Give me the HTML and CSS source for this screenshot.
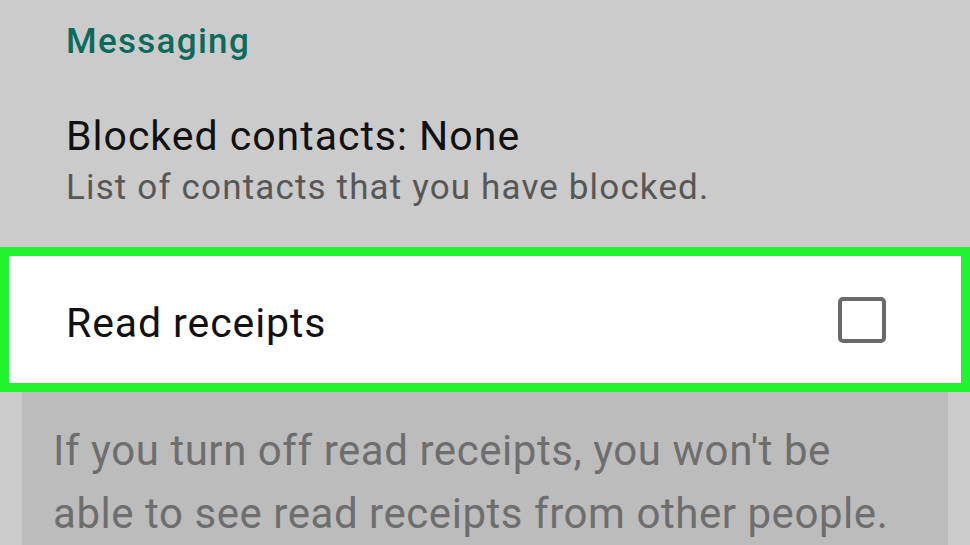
FILE: index.html
```html
<!DOCTYPE html>
<html>

<head>
    <title>Messaging settings</title>
    <link rel="stylesheet" href="styles.css">
</head>

<body class="screen">
    <h2 class="group-title">Messaging</h2>

    <div class="pref">
        <div class="pref-title">Blocked contacts: None</div>
        <div class="pref-summary">List of contacts that you have blocked.</div>
    </div>

    <div class="pref-row highlight">
        <span class="pref-title row-title">Read receipts</span>
        <span class="check"></span>
    </div>

    <div class="note">
        If you turn off read receipts, you won't be<br>
        able to see read receipts from other people.
    </div>
</body>

</html>
```

FILE: styles.css
```css
body {
    margin: 0;
    background-color: #cbcbcb;
    font-family: Roboto, "Noto Sans", sans-serif;
    overflow: hidden;
}

.group-title {
    margin: 0;
    padding: 22px 0 0 66px;
    font-size: 35px;
    line-height: 40px;
    font-weight: 500;
    color: #0b6b5b;
    letter-spacing: 1.3px;
}

.pref {
    padding: 50px 0 0 66px;
}

.pref-title {
    font-size: 41px;
    line-height: 48px;
    color: #111;
    letter-spacing: 1px;
}

.pref-summary {
    margin-top: 8px;
    font-size: 35px;
    line-height: 40px;
    color: #575757;
    letter-spacing: 1.15px;
}

.highlight {
    margin-top: 39px;
    height: 127px;
    border: 9px solid #1ff42f;
    background-color: #fff;
    display: flex;
    align-items: center;
    justify-content: space-between;
    padding: 0 75px 0 57px;
}

.row-title {
    padding-top: 7px;
    letter-spacing: 0.9px;
}

.check {
    width: 40px;
    height: 38px;
    border: 4px solid #6a6a6a;
    border-radius: 5px;
}

.note {
    margin: 0 22px;
    padding: 27px 0 0 31px;
    height: 126px;
    background-color: #bcbcbc;
    font-size: 42px;
    line-height: 63px;
    color: #6e6e6e;
    letter-spacing: 0.55px;
}
```
